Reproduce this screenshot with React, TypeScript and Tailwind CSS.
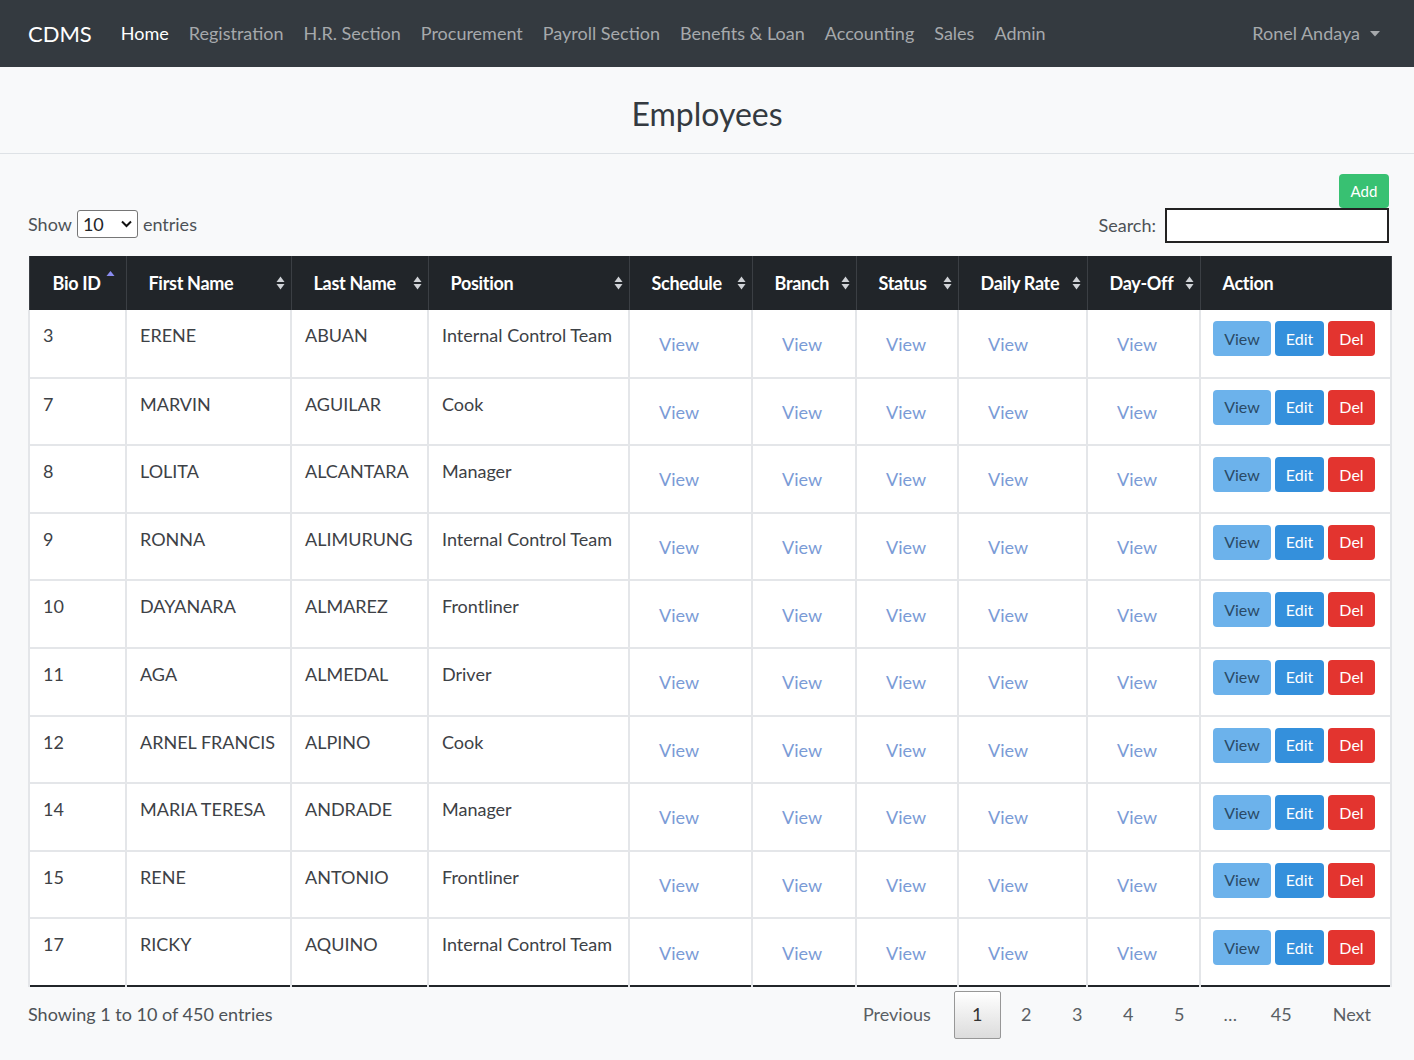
import React from "react";

const navLinks = [
  "Registration",
  "H.R. Section",
  "Procurement",
  "Payroll Section",
  "Benefits & Loan",
  "Accounting",
  "Sales",
  "Admin",
];

const columns = [
  { label: "Bio ID", w: "w-[97px]", sort: "asc" },
  { label: "First Name", w: "w-[165px]", sort: "both" },
  { label: "Last Name", w: "w-[137px]", sort: "both" },
  { label: "Position", w: "w-[201px]", sort: "both" },
  { label: "Schedule", w: "w-[123px]", sort: "both" },
  { label: "Branch", w: "w-[104px]", sort: "both" },
  { label: "Status", w: "w-[102px]", sort: "both" },
  { label: "Daily Rate", w: "w-[129px]", sort: "both" },
  { label: "Day-Off", w: "w-[113px]", sort: "both" },
  { label: "Action", w: "w-[191px]", sort: "none" },
];

const employees = [
  ["3", "ERENE", "ABUAN", "Internal Control Team"],
  ["7", "MARVIN", "AGUILAR", "Cook"],
  ["8", "LOLITA", "ALCANTARA", "Manager"],
  ["9", "RONNA", "ALIMURUNG", "Internal Control Team"],
  ["10", "DAYANARA", "ALMAREZ", "Frontliner"],
  ["11", "AGA", "ALMEDAL", "Driver"],
  ["12", "ARNEL FRANCIS", "ALPINO", "Cook"],
  ["14", "MARIA TERESA", "ANDRADE", "Manager"],
  ["15", "RENE", "ANTONIO", "Frontliner"],
  ["17", "RICKY", "AQUINO", "Internal Control Team"],
];

const pages = ["1", "2", "3", "4", "5", "…", "45"];

function SortIcon({ sort }: { sort: string }) {
  if (sort === "none") return null;
  if (sort === "asc") {
    return (
      <svg width="9" height="14" viewBox="0 0 9 14" className="ml-[5px] -mt-3">
        <path d="M4.5 1 L8.5 6 L0.5 6 Z" fill="#8a8cf0" />
      </svg>
    );
  }
  return (
    <svg width="9" height="14" viewBox="0 0 9 14" className="shrink-0">
      <path d="M4.5 0.5 L8.5 6 L0.5 6 Z" fill="#cfd2d6" />
      <path d="M4.5 13.5 L8.5 8 L0.5 8 Z" fill="#cfd2d6" />
    </svg>
  );
}

export default function App() {
  return (
    <div className="min-h-[1060px] bg-[#f8f9fa] font-['Lato',sans-serif] text-[#212529]">
      {/* Navbar */}
      <nav className="flex h-[67px] items-center bg-[#343a40] pl-[28px] pr-[34px]">
        <span className="mr-[29px] text-[22px] text-white">CDMS</span>
        <div className="flex items-center gap-[20px] text-[18px]">
          <span className="text-white">Home</span>
          {navLinks.map((l) => (
            <span key={l} className="text-[#a6a9ac]">
              {l}
            </span>
          ))}
        </div>
        <div className="ml-auto flex items-center gap-[10px] text-[18px] text-[#a6a9ac]">
          Ronel Andaya
          <svg width="10" height="6" viewBox="0 0 10 6">
            <path d="M0 0 L10 0 L5 5.5 Z" fill="#a6a9ac" />
          </svg>
        </div>
      </nav>

      {/* Title */}
      <div className="flex h-[87px] items-center justify-center border-b border-[#dee2e6] pt-[8px]">
        <h1 className="text-[32px] text-[#343a40]">Employees</h1>
      </div>

      <div className="px-[28px] pt-[20px]">
        <div className="-mr-[3px] flex justify-end">
          <button className="h-[34px] w-[50px] rounded-[4px] bg-[#38c172] text-[15px] text-white">
            Add
          </button>
        </div>

        <div className="-mr-[3px] flex items-end justify-between">
          <div className="mb-[5px] flex items-center gap-[5px] text-[18px] text-[#4d5257]">
            Show
            <div className="flex h-[28px] w-[61px] items-center justify-between rounded-[3px] border border-[#767676] bg-white pl-[5px] pr-[5px] text-[#212529]">
              10
              <svg width="11" height="8" viewBox="0 0 11 8">
                <path d="M1 1.5 L5.5 6 L10 1.5" stroke="#111" strokeWidth="2" fill="none" />
              </svg>
            </div>
            entries
          </div>
          <div className="flex items-center gap-[9px] text-[18px] text-[#4d5257]">
            Search:
            <div className="h-[35px] w-[224px] border-2 border-[#222] bg-white" />
          </div>
        </div>

        <table className="mt-[13px] w-[1363px] table-fixed border-collapse">
          <thead>
            <tr className="h-[54px] bg-[#212529] text-white">
              {columns.map((c, i) => (
                <th
                  key={c.label}
                  className={`${c.w} border-x border-[#3b3f44] text-left text-[18px] font-bold tracking-[-0.3px] ${
                    i === 0 ? "pl-[23px]" : "pl-[22px]"
                  } pr-[6px]`}
                >
                  <div className={`flex items-center ${c.sort === "asc" ? "" : "justify-between"}`}>
                    <span className="whitespace-nowrap">{c.label}</span>
                    <SortIcon sort={c.sort} />
                  </div>
                </th>
              ))}
            </tr>
          </thead>
          <tbody className="bg-white">
            {employees.map((e) => (
              <tr key={e[0]} className="h-[67.6px] border-b-2 border-[#e4e6e9] last:border-[#212529]">
                {e.map((v, i) => (
                  <td
                    key={i}
                    className="whitespace-nowrap border-x-2 border-[#e4e6e9] pl-[13px] pt-[12px] align-top text-[18px] text-[#3d4146]"
                  >
                    {v}
                  </td>
                ))}
                {[0, 1, 2, 3, 4].map((k) => (
                  <td
                    key={k}
                    className="border-x-2 border-[#e4e6e9] pl-[29px] pt-[2px] text-[18px] text-[#7a9bd6]"
                  >
                    View
                  </td>
                ))}
                <td className="border-x-2 border-[#e4e6e9] pl-[12px] pt-[11px] align-top">
                  <div className="flex gap-[4px] text-[16px]">
                    <span className="flex h-[35px] w-[58px] items-center justify-center rounded-[4px] bg-[#6cb2eb] text-[#2a4a66]">
                      View
                    </span>
                    <span className="flex h-[35px] w-[49px] items-center justify-center rounded-[4px] bg-[#3490dc] text-white">
                      Edit
                    </span>
                    <span className="flex h-[35px] w-[47px] items-center justify-center rounded-[4px] bg-[#e3342f] text-white">
                      Del
                    </span>
                  </div>
                </td>
              </tr>
            ))}
          </tbody>
        </table>

        <div className="flex items-center justify-between pr-[15px] pt-[4px] text-[18px] text-[#4d5257]">
          <span>Showing 1 to 10 of 450 entries</span>
          <div className="flex items-center">
            <span className="mr-[23px] text-[#5a5f64]">Previous</span>
            {pages.map((p, i) => (
              <span
                key={p}
                className={
                  i === 0
                    ? "flex h-[48px] w-[47px] items-center justify-center rounded-[2px] border border-[#979797] bg-gradient-to-b from-white to-[#dcdcdc] text-[#333]"
                    : "flex h-[48px] w-[51px] items-center justify-center text-[#5a5f64]"
                }
              >
                {p}
              </span>
            ))}
            <span className="ml-[26px] text-[#5a5f64]">Next</span>
          </div>
        </div>
      </div>
    </div>
  );
}
